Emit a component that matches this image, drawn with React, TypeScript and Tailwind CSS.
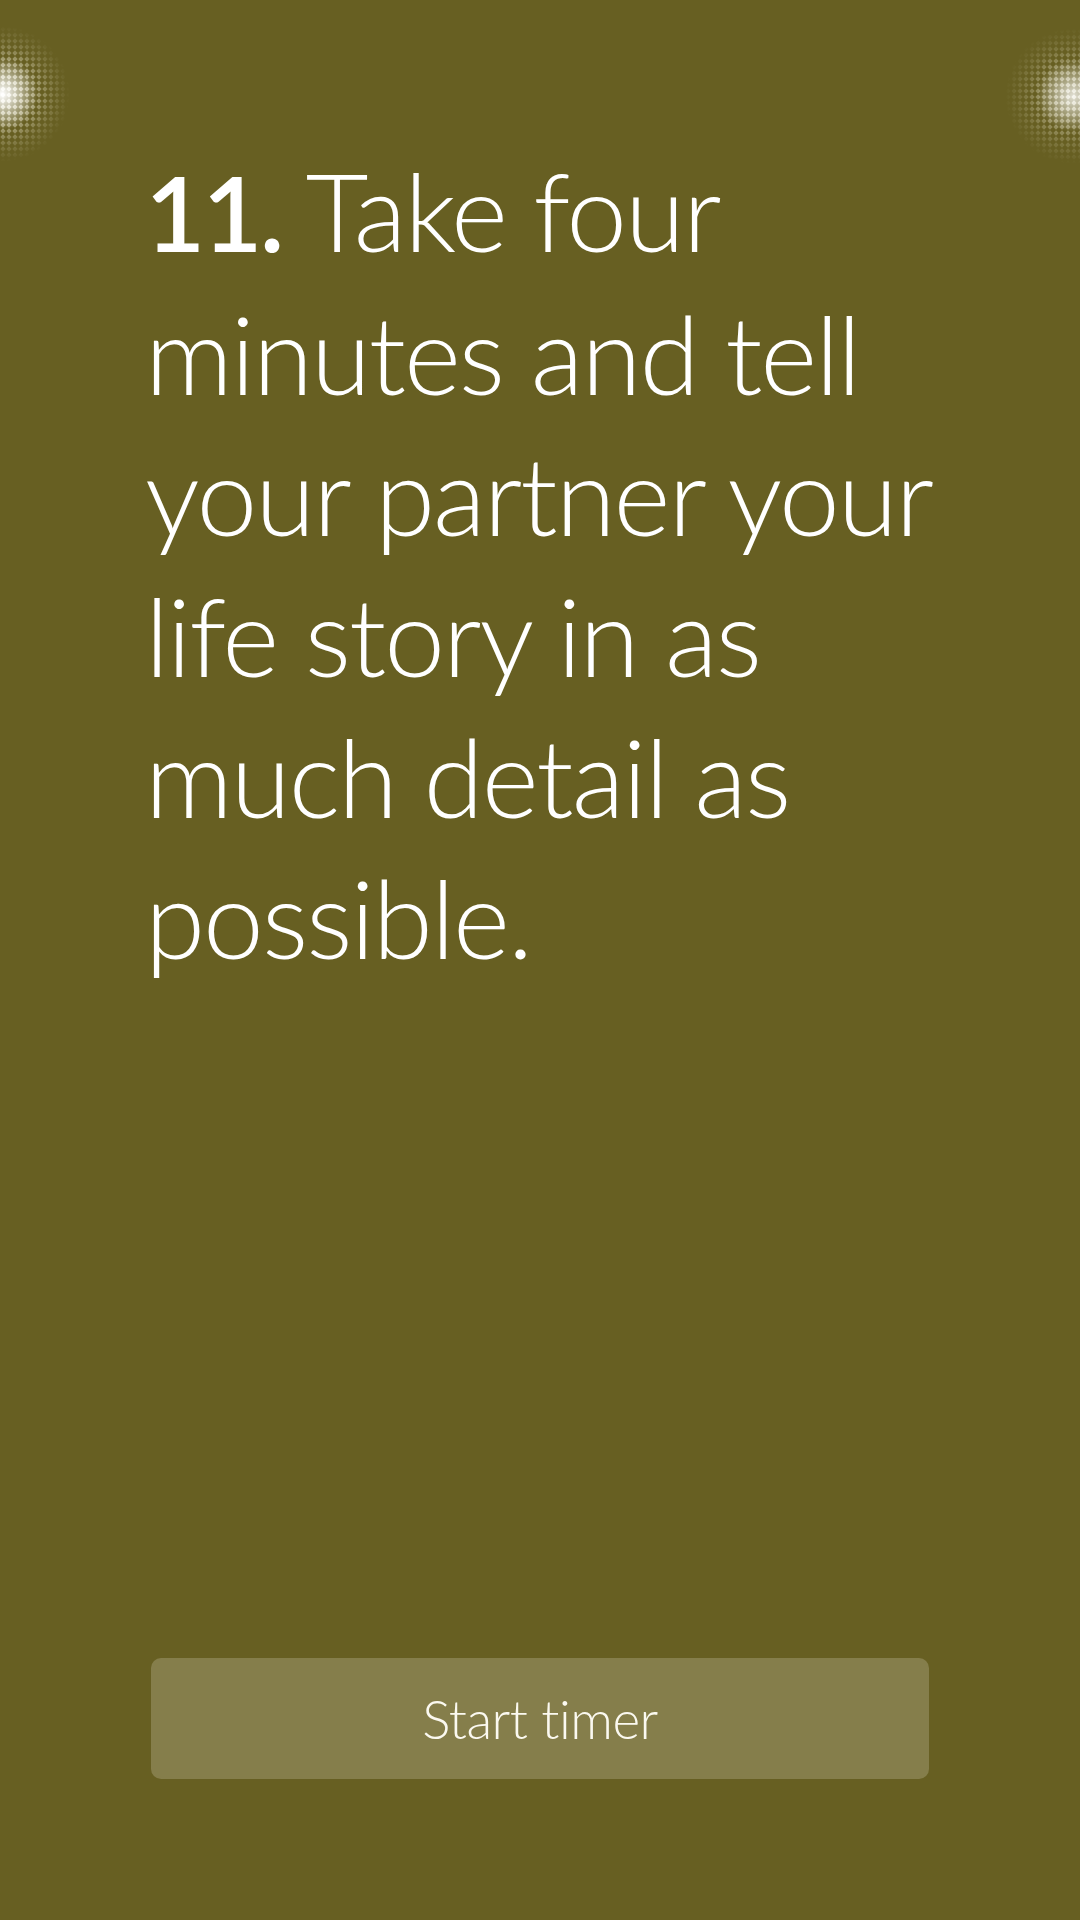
function Glow({ id, strength }: { id: string; strength: number }) {
  return (
    <svg width="160" height="160" viewBox="0 0 160 160">
      <defs>
        <radialGradient id={`g-${id}`} cx="80" cy="80" r="68" gradientUnits="userSpaceOnUse">
          <stop offset="0" stopColor="#fff" stopOpacity={strength} />
          <stop offset="0.35" stopColor="#fff" stopOpacity={strength * 0.6} />
          <stop offset="0.7" stopColor="#fff" stopOpacity={strength * 0.22} />
          <stop offset="1" stopColor="#fff" stopOpacity="0" />
        </radialGradient>
        <radialGradient id={`c-${id}`} cx="80" cy="80" r="36" gradientUnits="userSpaceOnUse">
          <stop offset="0" stopColor="#fff" stopOpacity={strength} />
          <stop offset="0.45" stopColor="#fff" stopOpacity={strength * 0.55} />
          <stop offset="1" stopColor="#fff" stopOpacity="0" />
        </radialGradient>
        <pattern id={`p-${id}`} width="6" height="6" patternUnits="userSpaceOnUse">
          <polygon points="3,0.3 5.7,3 3,5.7 0.3,3" fill="#f4f0d8" />
        </pattern>
        <mask id={`m-${id}`}>
          <rect width="160" height="160" fill={`url(#g-${id})`} />
        </mask>
      </defs>
      <rect width="160" height="160" fill={`url(#p-${id})`} mask={`url(#m-${id})`} />
      <circle cx="80" cy="80" r="36" fill={`url(#c-${id})`} />
    </svg>
  );
}

export default function App() {
  return (
    <div
      className="relative w-[1080px] h-[1920px] overflow-hidden bg-[#675f22] text-white flex flex-col"
      style={{ fontFamily: "Lato, 'Open Sans', sans-serif" }}
    >
      <div className="absolute left-[-78px] top-[14px]">
        <Glow id="l" strength={1} />
      </div>
      <div className="absolute left-[993px] top-[16px]">
        <Glow id="r" strength={0.8} />
      </div>

      <p className="mt-[139px] pl-[145px] pr-[120px] text-[109px] leading-[141px] font-light tracking-[-2px]">
        <span className="font-semibold text-[104px] tracking-[-3px]">11.</span> Take four
        <br />
        minutes and tell
        <br />
        your partner your
        <br />
        life story in as
        <br />
        much detail as
        <br />
        possible.
      </p>

      <div className="flex-1" />

      <div className="pl-[151px] pr-[151px] mb-[141px]">
        <button className="w-full h-[121px] rounded-[10px] bg-[#857e4b] text-[#fbf9f0] text-[53px] font-light tracking-[-0.5px] flex items-center justify-center">
          Start timer
        </button>
      </div>
    </div>
  );
}
